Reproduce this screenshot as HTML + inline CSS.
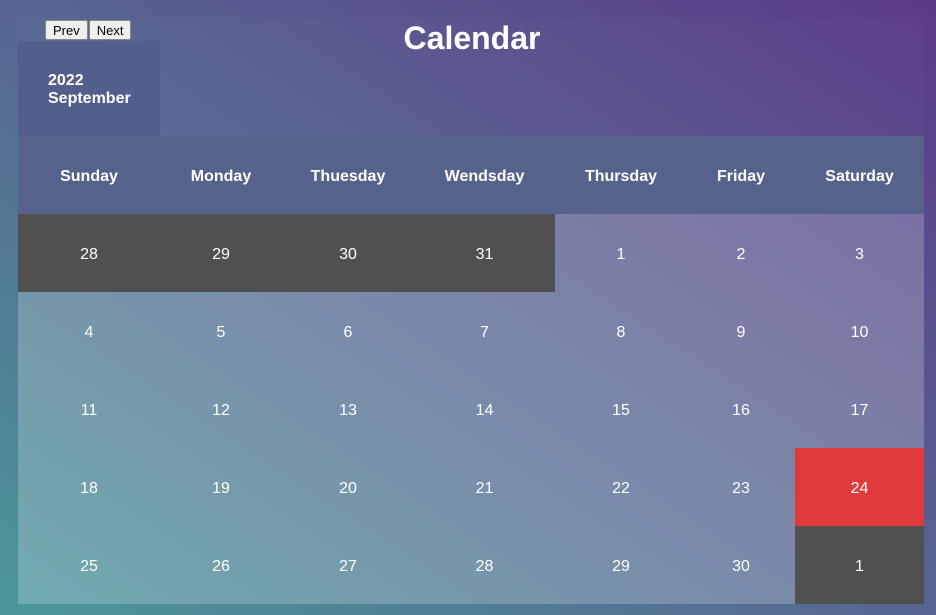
<!DOCTYPE html>
<html><head><style>
html,body{margin:0;padding:0}
body{width:936px;height:615px;overflow:hidden;position:relative;font-family:"Liberation Sans",sans-serif;color:#fff;
background:linear-gradient(to top right,#4a979a 0%,#566a92 45%,#5b3a88 100%);}
.wrap{position:absolute;left:18px;top:18px;width:906px;height:586px;background:rgba(255,255,255,0.02)}
.title{position:absolute;left:0;width:936px;top:20px;text-align:center;font-size:32px;font-weight:bold;padding-left:4px}
.btns{position:absolute;left:45px;top:20px;display:flex;gap:1px}
.btns span{display:block;background:#efefef;color:#000;border:1px solid #888;border-radius:2px;font-size:13px;padding:1px 7px;height:16px;line-height:17px}
.ym{position:absolute;left:18px;top:41px;width:142px;height:95px;background:#535e8c;font-weight:bold;font-size:16px;box-sizing:border-box;padding:31px 0 0 30px;line-height:18px}
table{position:absolute;left:18px;top:136px;border-collapse:collapse;width:906px}
td,th{padding:3px 0 0 0;height:75px;text-align:center;font-size:16px}
th{background:#56618c;font-weight:bold}
tbody tr td{background:rgba(255,255,255,0.2)}
td.d{background:#505050}
td.r{background:#e03a3a}
</style></head><body>
<div class="wrap"></div>
<div class="title">Calendar</div>
<div class="btns"><span>Prev</span><span>Next</span></div>
<div class="ym">2022<br>September</div>
<table>
<colgroup><col style="width:142px"><col style="width:122px"><col style="width:132px"><col style="width:141px"><col style="width:132px"><col style="width:108px"><col style="width:129px"></colgroup>
<thead><tr><th>Sunday</th><th>Monday</th><th>Thuesday</th><th>Wendsday</th><th>Thursday</th><th>Friday</th><th>Saturday</th></tr></thead>
<tbody>
<tr><td class="d">28</td><td class="d">29</td><td class="d">30</td><td class="d">31</td><td>1</td><td>2</td><td>3</td></tr>
<tr><td>4</td><td>5</td><td>6</td><td>7</td><td>8</td><td>9</td><td>10</td></tr>
<tr><td>11</td><td>12</td><td>13</td><td>14</td><td>15</td><td>16</td><td>17</td></tr>
<tr><td>18</td><td>19</td><td>20</td><td>21</td><td>22</td><td>23</td><td class="r">24</td></tr>
<tr><td>25</td><td>26</td><td>27</td><td>28</td><td>29</td><td>30</td><td class="d">1</td></tr>
</tbody></table>
</body></html>
